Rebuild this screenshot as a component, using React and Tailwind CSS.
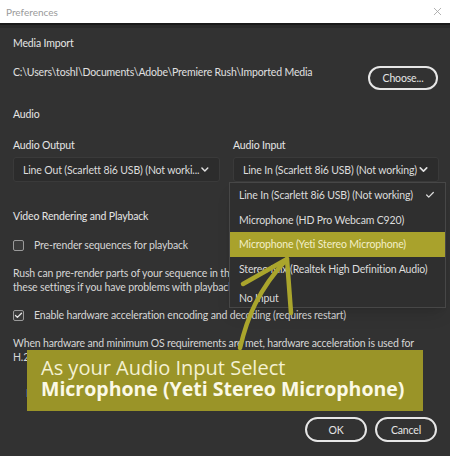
import { Check, ChevronDown, X } from 'lucide-react';

const INPUTS = [
  { label: 'Line In (Scarlett 8i6 USB) (Not working)', checked: true },
  { label: 'Microphone (HD Pro Webcam C920)' },
  { label: 'Microphone (Yeti Stereo Microphone)', active: true },
  { label: 'Stereo Mix (Realtek High Definition Audio)' },
  { label: 'No Input', last: true },
];

function Select({ label, className }) {
  return (
    <div className={`h-[25px] flex items-center justify-between pl-[9px] pr-[8px] bg-[#2c2c2c] border border-[#3a3a3a] rounded-[3px] ${className}`}>
      <span className="whitespace-nowrap text-[#dcdcdc]">{label}</span>
      <ChevronDown size={13} strokeWidth={3} className="text-[#e0e0e0]" />
    </div>
  );
}

function Checkbox({ checked, label }) {
  return (
    <div className="flex items-center gap-[10px] h-[14px]">
      <span className="w-[11px] h-[11px] rounded-[2px] border border-[#9a9a9a] flex items-center justify-center bg-[#3a3a3a]">
        {checked && <Check size={9} strokeWidth={3.5} className="text-[#e8e8e8]" />}
      </span>
      <span className="text-[#d6d6d6]">{label}</span>
    </div>
  );
}

export default function App() {
  return (
    <div
      className="relative w-[450px] h-[456px] overflow-hidden bg-[#323232] text-[10.5px] tracking-[-0.15px] leading-[14px]"
      style={{ fontFamily: 'Lato, "Noto Sans", sans-serif' }}
    >
      {/* title bar */}
      <div className="h-[23px] bg-white flex items-center justify-between pl-[6px] pr-[6px] tracking-normal">
        <span className="text-[10px] text-[#9a9a9a]">Preferences</span>
        <X size={13} strokeWidth={1.5} className="text-[#a0a0a0]" />
      </div>
      <div className="h-[2px] bg-[#1a1a1a]" />
      <div className="h-[3px] bg-[#2a2a2a]" />

      <div className="px-[13px]">
        <div className="pt-[8px] text-[#e6e6e6]">Media Import</div>

        <div className="mt-[15px] flex items-start justify-between">
          <span className="text-[#e0e0e0]">C:\Users\toshl\Documents\Adobe\Premiere Rush\Imported Media</span>
          <button className="w-[70px] h-[24px] -mr-[1px] mt-[1px] rounded-full border-2 border-[#e6e6e6] text-[#e6e6e6]">
            Choose...
          </button>
        </div>

        <div className="mt-[17px] text-[#e6e6e6]">Audio</div>

        <div className="mt-[17px] flex gap-[12px]">
          <div className="w-[207px]">
            <div className="text-[#e6e6e6]">Audio Output</div>
            <Select className="mt-[5px]" label="Line Out (Scarlett 8i6 USB) (Not worki..." />
          </div>
          <div className="flex-1 pl-[1px]">
            <div className="text-[#e6e6e6]">Audio Input</div>
            <Select className="mt-[5px]" label="Line In (Scarlett 8i6 USB) (Not working)" />
          </div>
        </div>

        <div className="mt-[27px] text-[#e6e6e6]">Video Rendering and Playback</div>

        <div className="mt-[15px]">
          <Checkbox label="Pre-render sequences for playback" />
        </div>

        <p className="mt-[14px] text-[#d6d6d6] whitespace-nowrap">
          Rush can pre-render parts of your sequence in the background to improve playback. Turn off
          <br />
          these settings if you have problems with playback.
        </p>

        <div className="mt-[14px]">
          <Checkbox checked label="Enable hardware acceleration encoding and decoding (requires restart)" />
        </div>

        <p className="mt-[14px] text-[#d6d6d6] whitespace-nowrap">
          When hardware and minimum OS requirements are met, hardware acceleration is used for
          <br />
          H.264 and HEVC encoding and decoding.
        </p>

        <div className="mt-[22px] ml-[13px] text-[#d6d6d6]">Learn more</div>

        <div className="mt-[17px] flex justify-end gap-[8px]">
          <button className="w-[62px] h-[25px] rounded-full border-2 border-[#e6e6e6] text-[#e6e6e6]">OK</button>
          <button className="w-[62px] h-[25px] rounded-full border-2 border-[#e6e6e6] text-[#e6e6e6]">Cancel</button>
        </div>
      </div>

      {/* open dropdown */}
      <div className="absolute left-[229px] top-[182px] w-[217px] h-[126px] bg-[#2f2f2f] border border-[#474747] shadow-lg">
        {INPUTS.map((it) => (
          <div
            key={it.label}
            className={`flex items-center justify-between pl-[9px] pr-[10px] ${it.last ? 'h-[29px] pt-[4px]' : 'h-[24.5px]'} ${it.active ? 'bg-[#a9a22c]' : ''}`}
          >
            <span className={`whitespace-nowrap ${it.active ? 'text-[#f3efc8]' : 'text-[#dcdcdc]'}`}>{it.label}</span>
            {it.checked && <Check size={10} strokeWidth={3} className="text-[#dcdcdc]" />}
          </div>
        ))}
      </div>

      {/* callout banner */}
      <div
        className="absolute left-[27px] top-[350px] w-[396px] h-[61px] bg-[#9a9428] pl-[14px] pt-[7px] tracking-normal"
        style={{ fontFamily: '"Open Sans", sans-serif' }}
      >
        <div className="text-[20px] leading-[21px] text-[#f4f1d2]">As your Audio Input Select</div>
        <div className="text-[19.5px] leading-[22px] font-bold text-[#fbf9e6]">
          Microphone (Yeti Stereo Microphone)
        </div>
      </div>

      {/* hand drawn arrow */}
      <svg className="absolute inset-0 pointer-events-none" width="450" height="456" viewBox="0 0 450 456">
        <g fill="none" stroke="#aaa52c" strokeWidth="4.5" strokeLinecap="round" strokeLinejoin="round">
          <path d="M240 348 C 247 318 258 290 287 259" />
          <path d="M243 284 L 287 259 L 291 313" />
        </g>
      </svg>
    </div>
  );
}
